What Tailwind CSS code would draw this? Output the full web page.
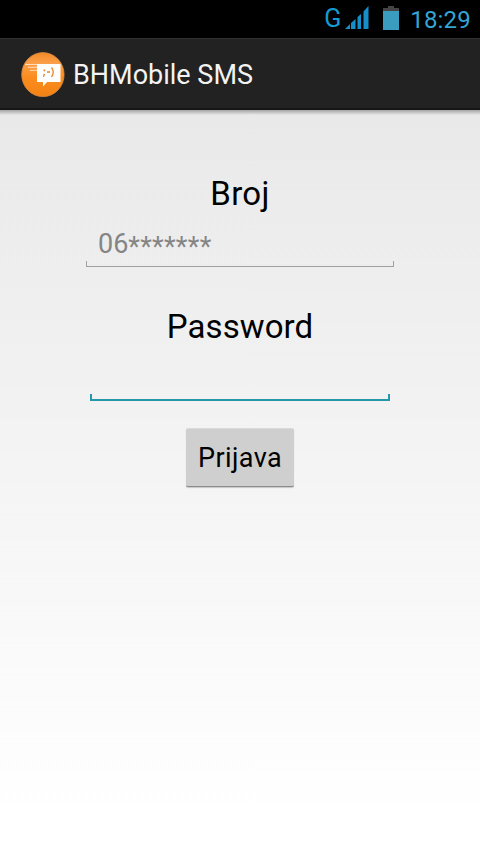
<!DOCTYPE html>
<html lang="bs">
<head>
<meta charset="utf-8">
<title>BHMobile SMS</title>
<script src="https://cdn.jsdelivr.net/npm/@tailwindcss/browser@4"></script>
</head>
<body class="font-[Roboto,sans-serif]">
<div class="w-[480px] h-[854px] flex flex-col overflow-hidden bg-black">
  <div class="h-[38px] shrink-0 flex justify-end pr-[10px] text-[#33a5d3]">
    <span class="text-[25px] leading-[38px] text-[#149bd2] mr-[4px]">G</span>
    <svg class="w-[24px] h-[24px] mt-[6px] mr-[14px]" viewBox="0 0 24 24" fill="#168fc9"><path d="M0 23L5 18V23ZM6 17L10.500 13V23H6ZM12.500 11L16 8V23H12.500ZM18.500 5.500L23.500 0V23H18.500Z"/></svg>
    <svg class="w-[16px] h-[24px] mt-[6px] mr-[11px]" viewBox="0 0 16 24"><path d="M0 2H5V0H11V2H16V6H0Z" fill="#444"/><path d="M0 5H16V24H0Z" fill="#3a9dc0"/></svg>
    <span class="-mr-[1px] text-[24px] leading-[40px] tracking-[0.2px]">18:29</span>
  </div>
  <header class="h-[72px] shrink-0 flex items-center pl-[20px] bg-[#222] border-t border-t-[#303030] border-b-2 border-b-[#161616]">
    <svg class="w-[46px] h-[46px] mt-[2px]" viewBox="0 0 46 46">
      <defs><linearGradient id="orb" x1="0" y1="0" x2="0" y2="1"><stop offset="0" stop-color="#f28a28"/><stop offset=".25" stop-color="#fba04a"/><stop offset=".55" stop-color="#fb8d20"/><stop offset="1" stop-color="#f38212"/></linearGradient></defs>
      <ellipse cx="22.900" cy="22.600" rx="21.200" ry="22" fill="url(#orb)" stroke="#d98a42" stroke-width=".8"/>
      <path d="M5 12.500H18M8 15.300H18M10 18.300H18" stroke="#ffdcb8" stroke-width="1"/>
      <path d="M17 12H40.500V30H27L23 34.500V30H17Z" fill="#fff"/>
      <g fill="none" stroke="#e8862c" stroke-width="1.300"><path d="M27 20H30M31.500 15.500Q35 20 31.500 25"/></g>
      <path d="M23.500 17.500H25.200V19.200H23.500ZM23.500 22H25.200L24 25H23Z" fill="#e8862c"/>
    </svg>
    <h1 class="ml-[7px] mt-[2px] text-[27px] leading-[32px] text-[#f3f3f3]">BHMobile SMS</h1>
  </header>
  <main class="flex-1 flex flex-col items-center text-black bg-linear-to-b from-[#e9e9e9] to-white to-95%">
    <div class="h-[5px] w-full shrink-0 bg-linear-to-b from-black/30 to-transparent"></div>
    <h2 class="mt-[59px] text-[33px] leading-[40px] tracking-[0.3px]">Broj</h2>
    <div class="mt-[10px] w-[308px] h-[43px] flex flex-col">
      <div class="h-[37px] pl-[12px] text-[27px] leading-[40px] text-[#858585]">06<span class="relative top-[3px] tracking-[0.25px]">*******</span></div>
      <div class="h-[6px] border border-t-0 border-[#a0a0a0]"></div>
    </div>
    <h2 class="mt-[40px] text-[33px] leading-[40px] tracking-[0.1px]">Password</h2>
    <div class="mt-[47px] w-[300px] h-[7px] border-2 border-t-0 border-[#2498aa]"></div>
    <button class="mt-[27px] w-[108px] h-[59px] rounded-[2px] bg-[#cfcfcf] border-t border-t-[#dadada] border-b border-b-[#8c8c8c] shadow-[0_1px_1px_#00000030] text-[27px] leading-[57px] tracking-[0.4px] pt-[1px]">Prijava</button>
  </main>
</div>
</body>
</html>
